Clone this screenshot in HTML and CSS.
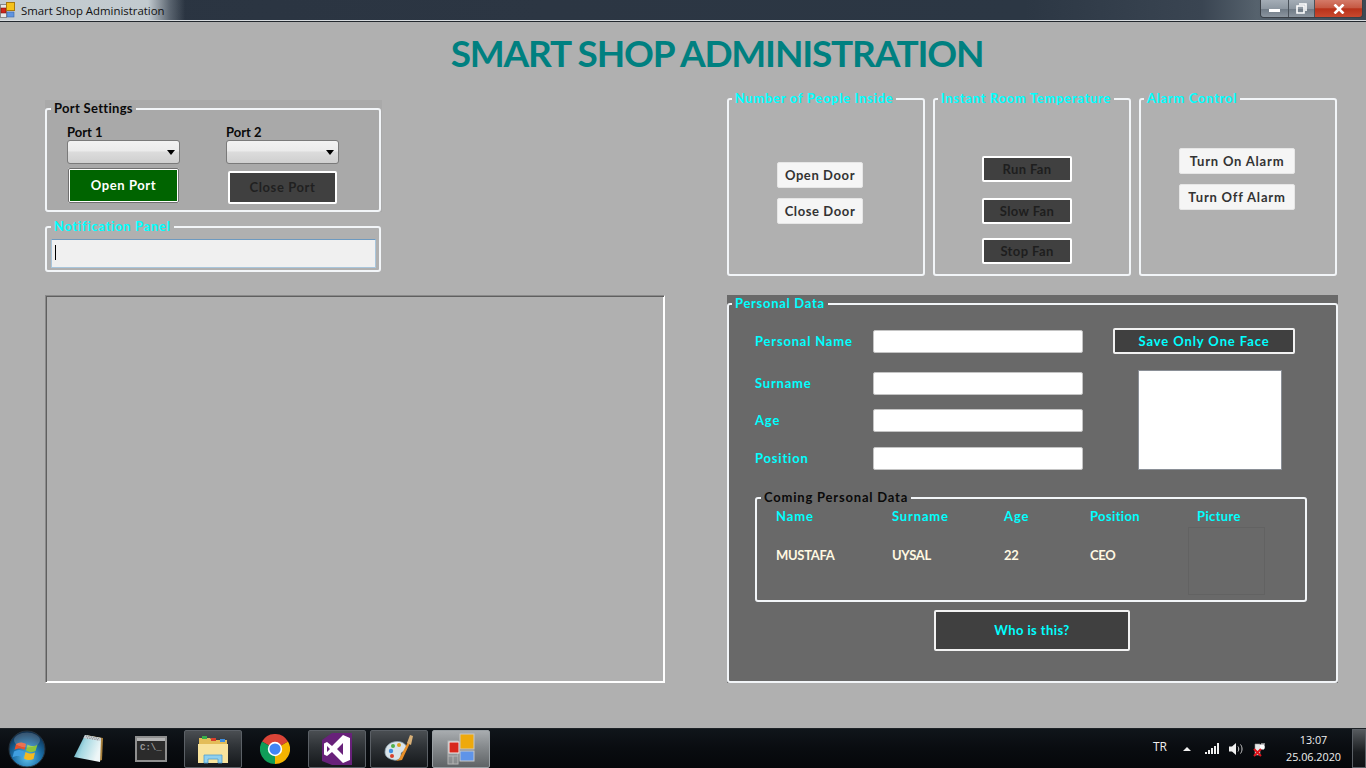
FILE: index.html
```html
<!DOCTYPE html>
<html lang="en">
<head>
  <meta charset="UTF-8">
  <title>Smart Shop Administration</title>
  <link rel="stylesheet" href="styles.css">
</head>
<body>
  <header class="titlebar">
    <div class="titlebar-name">
      <svg class="app-icon" width="16" height="16" viewBox="0 0 16 16">
        <rect x="0.5" y="2.5" width="6" height="13" fill="#e8e8e8" stroke="#888"/>
        <rect x="1" y="6" width="5" height="5" fill="#d0261c" stroke="#7a1410" stroke-width="0.6"/>
        <rect x="6.5" y="0.5" width="8" height="8" fill="#f5c21a" stroke="#a97a0c"/>
        <rect x="7" y="10" width="7" height="5" fill="#5f94e0" stroke="#3a64a8" stroke-width="0.6"/>
      </svg>
      <span>Smart Shop Administration</span>
    </div>
    <div class="window-buttons">
      <div class="win-btn win-min"><span class="min-glyph"></span></div>
      <div class="win-btn win-max">
        <svg width="11" height="11" viewBox="0 0 11 11">
          <path d="M3 1h7v7M1 3h7v7H1z" fill="none" stroke="#fff" stroke-width="1.6"/>
        </svg>
      </div>
      <div class="win-btn win-close">
        <svg width="12" height="10" viewBox="0 0 12 10">
          <path d="M1.5 0.5l9 9M10.5 0.5l-9 9" stroke="#fff" stroke-width="2.6"/>
        </svg>
      </div>
    </div>
  </header>

  <main class="app">
    <h1 class="app-title">SMART SHOP ADMINISTRATION</h1>

    <div class="columns">
      <section class="col-left">
        <div class="shade-light">
          <fieldset class="group group-port">
            <legend class="legend-dark">Port Settings</legend>
            <div class="port-cols">
              <div class="port-col">
                <label class="port-label">Port 1</label>
                <div class="combo"><select class="combo-select"></select></div>
                <button class="btn-open-port">Open Port</button>
              </div>
              <div class="port-col">
                <label class="port-label">Port 2</label>
                <div class="combo"><select class="combo-select"></select></div>
                <button class="btn-close-port">Close Port</button>
              </div>
            </div>
          </fieldset>
        </div>

        <fieldset class="group group-notify">
          <legend class="legend-cyan">Notification Panel</legend>
          <div class="notify-box"><span class="caret"></span></div>
        </fieldset>

        <div class="camera-box"></div>
      </section>

      <section class="col-right">
        <div class="control-row">
          <fieldset class="group group-control">
            <legend class="legend-cyan">Number of People Inside</legend>
            <div class="control-btns door-btns">
              <button class="btn-light btn-door">Open Door</button>
              <button class="btn-light btn-door">Close Door</button>
            </div>
          </fieldset>
          <fieldset class="group group-control">
            <legend class="legend-cyan">Instant Room Temperature</legend>
            <div class="control-btns fan-btns">
              <button class="btn-fan">Run Fan</button>
              <button class="btn-fan fan-slow">Slow Fan</button>
              <button class="btn-fan">Stop Fan</button>
            </div>
          </fieldset>
          <fieldset class="group group-control">
            <legend class="legend-cyan">Alarm Control</legend>
            <div class="control-btns alarm-btns">
              <button class="btn-light btn-alarm">Turn On Alarm</button>
              <button class="btn-light btn-alarm">Turn Off Alarm</button>
            </div>
          </fieldset>
        </div>

        <div class="shade-dark">
          <fieldset class="group group-person">
            <legend class="legend-cyan">Personal Data</legend>
            <div class="person-form">
              <div class="person-fields">
                <div class="field-row row-name">
                  <label class="field-label">Personal Name</label>
                  <input class="field-input" type="text">
                </div>
                <div class="field-row">
                  <label class="field-label">Surname</label>
                  <input class="field-input" type="text">
                </div>
                <div class="field-row row-age">
                  <label class="field-label">Age</label>
                  <input class="field-input" type="text">
                </div>
                <div class="field-row">
                  <label class="field-label">Position</label>
                  <input class="field-input" type="text">
                </div>
              </div>
              <div class="person-side">
                <button class="btn-save">Save Only One Face</button>
                <div class="face-box"></div>
              </div>
            </div>

            <fieldset class="group group-coming">
              <legend class="legend-dark">Coming Personal Data</legend>
              <div class="coming-grid">
                <span class="coming-head">Name</span>
                <span class="coming-head">Surname</span>
                <span class="coming-head">Age</span>
                <span class="coming-head head-position">Position</span>
                <span class="coming-head head-picture">Picture</span>
                <span class="coming-value">MUSTAFA</span>
                <span class="coming-value">UYSAL</span>
                <span class="coming-value">22</span>
                <span class="coming-value">CEO</span>
                <div class="coming-picture"></div>
              </div>
            </fieldset>

            <button class="btn-who">Who is this?</button>
          </fieldset>
        </div>
      </section>
    </div>
  </main>

  <footer class="taskbar">
    <svg class="start-orb" width="38" height="38" viewBox="0 0 38 38">
      <defs>
        <radialGradient id="orbFill" cx="50%" cy="75%" r="70%">
          <stop offset="0" stop-color="#5fc1ec"/>
          <stop offset="0.55" stop-color="#1b6fa8"/>
          <stop offset="1" stop-color="#0c2f50"/>
        </radialGradient>
      </defs>
      <circle cx="19" cy="19" r="18" fill="url(#orbFill)" stroke="#26323c"/>
      <path d="M8 14c3-2 6-2 10 0l-1.500 6c-3-2-7-2-10 0z" fill="#e5532d"/>
      <path d="M19.500 14.500c4 2 7 2 10 0l-2 6.500c-3 1.500-6 1.500-9.500-.5z" fill="#8cc43c"/>
      <path d="M6 21.500c3-2 6-2 10 0l-1.500 6c-3-2-7-2-10 0z" fill="#3f9fe0"/>
      <path d="M17.500 22c4 2 7 2 9.500.5l-1.500 6.500c-3 1.500-6 1.500-9.500-.5z" fill="#f5b91f"/>
      <ellipse cx="19" cy="10" rx="13" ry="7.500" fill="#fff" opacity="0.18"/>
    </svg>

    <div class="task-item">
      <svg width="32" height="32" viewBox="0 0 32 32">
        <defs>
          <linearGradient id="padFill" x1="0" y1="0" x2="1" y2="0.4">
            <stop offset="0" stop-color="#2f8fa6"/>
            <stop offset="0.45" stop-color="#a5d8e2"/>
            <stop offset="1" stop-color="#eef6f7"/>
          </linearGradient>
        </defs>
        <path d="M13 2l17 3-1 22-3 1z" fill="#a8803c"/>
        <path d="M12 2l16 3-1 24L1 24z" fill="url(#padFill)"/>
        <path d="M12 2l16 3-.5 3L10.500 5z" fill="#c8ccd0"/>
        <path d="M13 3l13 2.500M14 5l12 2" stroke="#7d8488" stroke-dasharray="1 1.500"/>
      </svg>
    </div>
    <div class="task-item">
      <svg width="32" height="26" viewBox="0 0 32 26">
        <rect x="1" y="1" width="30" height="24" fill="#2b2b2b" stroke="#8f8f8f" stroke-width="2"/>
        <rect x="2" y="2" width="28" height="3" fill="#b4b4b4"/>
        <text x="5" y="14" class="cmd-text">C:\_</text>
      </svg>
    </div>
    <div class="task-item task-open">
      <svg width="32" height="32" viewBox="0 0 32 32">
        <path d="M2 5h11l2 2h15v22H2z" fill="#e3bd58"/>
        <rect x="5" y="3" width="5" height="3" fill="#38b04a"/>
        <rect x="14" y="5" width="5" height="3" fill="#d8402c"/>
        <rect x="23" y="6" width="5" height="3" fill="#3f8fe0"/>
        <path d="M1 11h30v19H1z" fill="#f8e39c"/>
        <path d="M7 30v-8h18v8h-4v-4H11v4z" fill="#8fd0ef" stroke="#4f9fd0" stroke-width="0.8"/>
      </svg>
    </div>
    <div class="task-item">
      <svg width="30" height="30" viewBox="0 0 48 48">
        <path d="M24 24L44.800 12A24 24 0 0 0 3.200 12z" fill="#db4437"/>
        <path d="M24 24L3.200 12A24 24 0 0 0 24 48z" fill="#0f9d58"/>
        <path d="M24 24L24 48A24 24 0 0 0 44.800 12z" fill="#f4b400"/>
        <circle cx="24" cy="24" r="11.500" fill="#fff"/>
        <circle cx="24" cy="24" r="9" fill="#4285f4"/>
      </svg>
    </div>
    <div class="task-item task-open">
      <svg width="30" height="32" viewBox="0 0 30 32">
        <path d="M0 7l10-7h20v32H10L0 28z" fill="#68217a"/>
        <path d="M21 2l7 3v22l-7 3L10 19l-5 4-3-1.500V10.500L5 9l5 4zM21 10l-6 6 6 6zM5 13v6l3-3z" fill="#fff" fill-rule="evenodd"/>
      </svg>
    </div>
    <div class="task-item task-open">
      <svg width="32" height="32" viewBox="0 0 32 32">
        <path d="M2 19C2 11 11 7 18 9c6 2 7 7 4 9-3 1-4 1-4 4s-3 6-7 5c-5-1-9-3-9-8z" fill="#d9e4ea" stroke="#8fa3ad" stroke-width="0.8"/>
        <circle cx="8" cy="18" r="2.200" fill="#3f8fe0"/>
        <circle cx="10" cy="13" r="2" fill="#4fb04a"/>
        <circle cx="16" cy="12" r="2" fill="#e0a020"/>
        <circle cx="9" cy="23" r="2" fill="#d8402c"/>
        <path d="M13 28l3-2 9-17 2 1-8 17z" fill="#e8902a"/>
        <path d="M24 10l3-8 3 1-2 9z" fill="#d8b078"/>
      </svg>
    </div>
    <div class="task-item task-active">
      <svg width="28" height="32" viewBox="0 0 28 32">
        <rect x="1" y="8" width="10" height="23" fill="#e8e8e8" fill-opacity="0.25" stroke="#b5b5b5"/>
        <path d="M1 23h10M6 23v8" stroke="#b5b5b5"/>
        <rect x="2" y="9" width="10" height="11" fill="#d8281c" stroke="#eee"/>
        <rect x="13" y="1" width="14" height="15" fill="#eea90c" stroke="#c8c8c8"/>
        <rect x="13" y="18" width="14" height="10" fill="#5f94e8" stroke="#c8c8c8"/>
      </svg>
    </div>

    <div class="tray">
      <span class="tray-lang">TR</span>
      <span class="tray-arrow"></span>
      <svg class="tray-signal" width="14" height="11" viewBox="0 0 14 11">
        <path d="M0 9h2v2H0zM3 7h2v4H3zM6 5h2v6H6zM9 3h2v8H9zM12 0h2v11h-2z" fill="#f0f0f0"/>
      </svg>
      <svg class="tray-volume" width="15" height="14" viewBox="0 0 15 14">
        <path d="M0 4.500h3L7 1v12L3 9.500H0z" fill="#f0f0f0"/>
        <path d="M9 4.500c1 1.500 1 3.500 0 5M11.500 2.500c2 2.500 2 6.500 0 9" fill="none" stroke="#d0d0d0"/>
      </svg>
      <svg class="tray-power" width="14" height="16" viewBox="0 0 14 16">
        <path d="M2 3h5v11H2z" fill="#e8e8e8" stroke="#999" stroke-width="0.6"/>
        <path d="M8 3h4M8 6h4M7 4h4v4H7z" stroke="#fff" fill="#fff"/>
        <path d="M1 8l7 7M8 8l-7 7" stroke="#e0141c" stroke-width="2"/>
      </svg>
      <div class="clock">
        <span>13:07</span>
        <span>25.06.2020</span>
      </div>
      <div class="show-desktop"></div>
    </div>
  </footer>
</body>
</html>
```

FILE: styles.css
```css
* {
  box-sizing: border-box;
}

body {
  margin: 0;
  width: 1366px;
  height: 768px;
  display: flex;
  flex-direction: column;
  overflow: hidden;
  font-family: "Lato", "Open Sans", sans-serif;
  background-color: #b0b0b0;
}

button {
  font-family: inherit;
  font-weight: 700;
  padding: 0 0 2px;
}

/* window chrome */
.titlebar {
  height: 22px;
  flex: none;
  display: flex;
  justify-content: space-between;
  align-items: flex-start;
  background: linear-gradient(90deg, #2a3441 0%, #2c3643 40%, #2c3744 75%, #3a4552 88%, #56626d 92%, #3d4854 100%);
  border-bottom: 1px solid #23282e;
  box-shadow: inset 0 -1px 0 #d8dcdf;
}

.titlebar-name {
  height: 20px;
  width: 185px;
  display: flex;
  align-items: center;
  gap: 5px;
  font-family: "Open Sans", sans-serif;
  font-size: 11.4px;
  color: #111;
  background: linear-gradient(90deg, #c4ccd0 0%, #c2cacf 80%, rgba(120, 130, 140, 0.6) 92%, rgba(60, 70, 80, 0) 100%);
}

.app-icon {
  flex: none;
}

.window-buttons {
  display: flex;
  height: 18px;
  margin-right: 3px;
  border: 1px solid #3a4047;
  border-top: none;
  border-radius: 0 0 4px 4px;
  overflow: hidden;
}

.win-btn {
  height: 100%;
  display: flex;
  align-items: center;
  justify-content: center;
  background: linear-gradient(180deg, #a4adb6 0%, #8d97a1 50%, #6f7a85 52%, #8b959f 100%);
}

.win-min {
  width: 28px;
  border-right: 1px solid #4a525a;
}

.min-glyph {
  width: 11px;
  height: 3px;
  margin-top: 4px;
  background-color: #fff;
}

.win-max {
  width: 26px;
  border-right: 1px solid #4a525a;
}

.win-close {
  width: 47px;
  background: linear-gradient(180deg, #d47a68 0%, #c65a44 45%, #b8321a 52%, #c9492f 100%);
}

/* main form */
.app {
  flex: 1;
  min-height: 0;
}

.app-title {
  height: 68px;
  margin: 0;
  padding: 8px 0 0 68px;
  text-align: center;
  font-size: 37px;
  line-height: 46px;
  font-weight: 700;
  letter-spacing: -1.2px;
  color: #008080;
}

.columns {
  display: flex;
  padding-left: 45px;
  gap: 62px;
}

.col-left {
  width: 620px;
  padding-top: 10px;
}

.col-right {
  width: 611px;
}

.group {
  margin: 0;
  padding: 0;
  min-width: 0;
  border: 2px solid #f2f5f8;
  border-radius: 3px;
}

.group legend {
  margin-left: 4px;
  padding: 0 3px 2px;
  font-size: 13px;
  line-height: 16px;
  font-weight: 700;
  letter-spacing: 0.3px;
}

.group-control legend,
.group-person > legend {
  margin-left: 3px;
}

.group .legend-cyan {
  letter-spacing: 0.7px;
}

.group-coming .legend-dark {
  letter-spacing: 0.8px;
}

.legend-dark {
  color: #0a0a0a;
}

.legend-cyan {
  color: #00ffff;
}

.shade-light {
  background-color: #a9a9a9;
  width: 337px;
  height: 112px;
}

.group-port {
  width: 336px;
  height: 112px;
}

.port-cols {
  display: flex;
  gap: 46px;
  padding: 6px 0 0 20px;
}

.port-col {
  width: 113px;
  display: flex;
  flex-direction: column;
  align-items: flex-start;
}

.port-label {
  font-size: 13px;
  line-height: 16px;
  font-weight: 700;
  color: #0a0a0a;
}

.combo {
  position: relative;
  width: 113px;
  height: 24px;
}

.combo::after {
  content: "";
  position: absolute;
  right: 5px;
  top: 10px;
  border-left: 4px solid transparent;
  border-right: 4px solid transparent;
  border-top: 5px solid #000;
}

.combo-select {
  width: 100%;
  height: 100%;
  appearance: none;
  border: 1px solid #7a7a7a;
  border-radius: 3px;
  background: linear-gradient(180deg, #f2f2f2 0%, #ebebeb 45%, #dcdcdc 50%, #cfcfcf 100%);
}

.btn-open-port {
  width: 111px;
  height: 35px;
  margin: 4px 0 0 1px;
  background-color: #006400;
  border: 2px solid #fff;
  outline: 1px solid #6f6f6f;
  outline-offset: -1px;
  border-radius: 2px;
  color: #fff;
  font-size: 13px;
  letter-spacing: 0.6px;
}

.btn-close-port {
  width: 109px;
  height: 33px;
  margin: 7px 0 0 2px;
  background-color: #404040;
  border: 2px solid #fff;
  border-radius: 2px;
  color: #202020;
  font-size: 13px;
  letter-spacing: 0.6px;
}

.group-notify {
  width: 336px;
  height: 54px;
  margin-top: 6px;
}

.notify-box {
  width: 325px;
  height: 29px;
  margin: 3px 0 0 4px;
  padding: 5px 3px;
  background-color: #f0f0f0;
  border: 1px solid #a9c6dc;
  border-top-color: #6e9ac0;
}

.caret {
  display: block;
  width: 1px;
  height: 15px;
  background-color: #000;
}

.camera-box {
  width: 620px;
  height: 388px;
  margin-top: 23px;
  border-style: solid;
  border-width: 1px;
  border-color: #8a8a8a #fff #fff #8a8a8a;
  box-shadow: inset 1px 1px 0 #5f5f5f, inset -1px -1px 0 #fff;
}

/* right side */
.control-row {
  display: flex;
  gap: 8px;
  height: 186px;
}

.group-control {
  width: 198px;
  height: 186px;
}

.control-btns {
  display: flex;
  flex-direction: column;
  align-items: center;
}

.door-btns {
  padding: 54px 12px 0 0;
  gap: 10px;
}

.fan-btns {
  padding: 48px 10px 0 0;
  gap: 16px;
}

.alarm-btns {
  padding: 40px 2px 0 0;
  gap: 10px;
}

.btn-light {
  height: 26px;
  padding: 0;
  background-color: #f5f5f5;
  border: 1px solid #e6e6e6;
  border-radius: 2px;
  color: #333;
  font-size: 13px;
  letter-spacing: 0.6px;
}

.btn-door {
  width: 86px;
}

.btn-alarm {
  width: 116px;
  letter-spacing: 0.8px;
}

.btn-fan {
  width: 90px;
  height: 26px;
  padding: 0;
  background-color: #404040;
  border: 2px solid #fff;
  border-radius: 2px;
  color: #1e1e1e;
  font-size: 13px;
  letter-spacing: 0.4px;
}

.fan-slow {
  margin-bottom: -2px;
}

.shade-dark {
  width: 611px;
  height: 388px;
  margin-top: 19px;
  background-color: #696969;
}

.group-person {
  width: 611px;
  height: 388px;
}

.person-form {
  display: flex;
  padding: 15px 0 0 26px;
}

.person-fields {
  width: 328px;
  padding-top: 2px;
  display: flex;
  flex-direction: column;
  gap: 14px;
}

.field-row {
  display: flex;
  align-items: center;
  height: 23px;
}

.row-name {
  margin-bottom: 5px;
}

.row-age {
  margin-bottom: 1px;
}

.field-label {
  width: 118px;
  padding-bottom: 2px;
  font-size: 13px;
  font-weight: 700;
  letter-spacing: 0.8px;
  color: #00ffff;
}

.field-input {
  width: 210px;
  height: 23px;
  background-color: #fff;
  border: 1px solid #c4c4c4;
  border-radius: 2px;
}

.person-side {
  width: 182px;
  margin-left: 30px;
}

.btn-save {
  width: 182px;
  height: 26px;
  padding: 0;
  background-color: #404040;
  border: 2px solid #f2f2f2;
  border-radius: 2px;
  color: #00ffff;
  font-size: 13px;
  letter-spacing: 0.9px;
}

.face-box {
  width: 144px;
  height: 100px;
  margin: 16px 0 0 25px;
  background-color: #fff;
  border: 1px solid #8a8f96;
}

.group-coming {
  width: 552px;
  height: 113px;
  margin: 19px 0 0 26px;
}

.coming-grid {
  display: grid;
  grid-template-columns: 116px 112px 86px 107px 1fr;
  grid-template-rows: 18px 68px;
  row-gap: 1px;
  padding: 1px 0 0 19px;
}

.coming-head {
  font-size: 13px;
  line-height: 16px;
  font-weight: 700;
  letter-spacing: 0.85px;
  color: #00ffff;
}

.head-position,
.head-picture {
  letter-spacing: 0.35px;
}

.coming-value {
  padding-top: 19px;
  font-size: 13px;
  line-height: 18px;
  font-weight: 700;
  letter-spacing: -0.3px;
  color: #fff8e1;
}

.coming-picture {
  width: 77px;
  height: 68px;
  margin-left: -9px;
  border: 1px solid #626262;
}

.btn-who {
  display: block;
  width: 196px;
  height: 41px;
  margin: 8px 0 0 205px;
  background-color: #404040;
  border: 2px solid #f2f2f2;
  border-radius: 2px;
  color: #00ffff;
  font-size: 13px;
  letter-spacing: 0.4px;
}

/* taskbar */
.taskbar {
  height: 40px;
  flex: none;
  display: flex;
  align-items: center;
  padding-left: 8px;
  background: linear-gradient(180deg, #10151a 0%, #090c10 50%, #05070a 100%);
  border-top: 1px solid #1d2226;
}

.start-orb {
  flex: none;
  margin-right: 14px;
}

.task-item {
  width: 58px;
  height: 38px;
  margin-right: 4px;
  flex: none;
  display: flex;
  align-items: center;
  justify-content: center;
  border-radius: 2px;
}

.task-open {
  border: 1px solid #5b6066;
  background: linear-gradient(180deg, #4a4e52 0%, #2e3236 45%, #15181b 100%);
}

.task-active {
  border: 1px solid #9aa0a4;
  background: linear-gradient(180deg, #a8acaf 0%, #85898c 45%, #5f6366 100%);
}

.cmd-text {
  font-family: "Liberation Mono", monospace;
  font-size: 9px;
  font-weight: 700;
  fill: #9a9a9a;
}

.tray {
  margin-left: auto;
  display: flex;
  align-items: center;
  height: 100%;
  color: #f0f0f0;
  font-family: "Open Sans", sans-serif;
  font-size: 12px;
}

.tray-lang {
  padding-bottom: 4px;
}

.tray-arrow {
  margin-left: 16px;
  border-left: 4px solid transparent;
  border-right: 4px solid transparent;
  border-bottom: 4px solid #f0f0f0;
}

.tray-signal {
  margin-left: 14px;
}

.tray-volume {
  margin-left: 10px;
}

.tray-power {
  margin-left: 9px;
}

.clock {
  width: 77px;
  margin-left: 8px;
  padding-bottom: 2px;
  display: flex;
  flex-direction: column;
  align-items: center;
  line-height: 17px;
  font-size: 10.8px;
}

.show-desktop {
  width: 14px;
  height: 100%;
  border: 1px solid #5b6066;
  background: linear-gradient(180deg, #55595d 0%, #1a1d20 60%, #101215 100%);
}
```
